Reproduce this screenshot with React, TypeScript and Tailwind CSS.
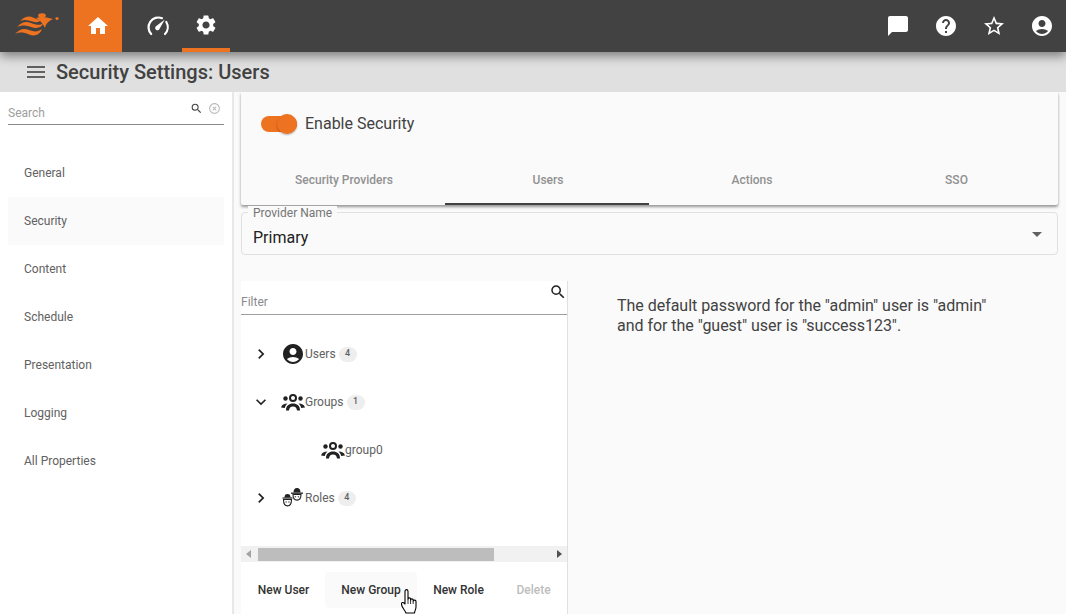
import React from "react";
import {
    MdAccountCircle,
    MdArrowDropDown,
    MdChatBubble,
    MdChevronRight,
    MdExpandMore,
    MdHelp,
    MdHighlightOff,
    MdHome,
    MdMenu,
    MdSearch,
    MdSettings,
    MdStarBorder,
} from "react-icons/md";

const navItems = ["General", "Security", "Content", "Schedule", "Presentation", "Logging", "All Properties"];
const tabs = ["Security Providers", "Users", "Actions", "SSO"];

function Logo() {
    return (
        <svg width="44" height="23" viewBox="0 0 44 23" fill="#ee7320">
            <path d="M5 8C10 3.500 14 2.500 18 4.500s6 2.500 8 1.500c-.5 3-4 4-8.500 2.500S10 6 5 8z" />
            <path d="M2 14C7 8.500 11 8 16 10s9 2.500 12 .5c-1 4-6 5.500-12 3.500S7 12 2 14z" />
            <path d="M0 21c5-5.500 9-6 14-4s9 2 13-1c-2 5.500-7 8-13 5.500S5 19 0 21z" />
            <path d="M21 5c5-2 10-1 17 1-4 2-7 4-8 9-2-4-5-8-9-10z" />
            <ellipse cx="27" cy="2.600" rx="3.800" ry="2.400" />
            <circle cx="42" cy="5.500" r="1.600" />
        </svg>
    );
}

function SpeedIcon() {
    return (
        <svg width="24" height="24" viewBox="0 0 24 24" fill="none" stroke="#fff" strokeWidth="2.200" strokeLinecap="round">
            <path d="M5.200 20A9.800 9.800 0 0 1 16 4.200" />
            <path d="M20.300 8A9.800 9.800 0 0 1 19 20" />
            <path d="M18.800 5.500l-5.200 9.300a2.300 2.300 0 1 1-3.300-2.800z" fill="#fff" stroke="none" />
        </svg>
    );
}

function GroupsIcon() {
    return (
        <svg width="24" height="18" viewBox="0 0 24 18" fill="#212121">
            <circle cx="12" cy="5" r="3" fill="none" stroke="#212121" strokeWidth="2" />
            <circle cx="4.500" cy="5.500" r="2.200" />
            <circle cx="19.500" cy="5.500" r="2.200" />
            <path d="M5 17.500c0-5 3-7 7-7s7 2 7 7h-3c-.3-2.800-1.500-4-4-4s-3.700 1.200-4 4z" />
            <path d="M0 14.500c1-3 3-4 6.500-4-1.500 1.500-2.300 2.500-2.700 4.500z" />
            <path d="M24 14.500c-1-3-3-4-6.500-4 1.500 1.500 2.300 2.500 2.700 4.500z" />
        </svg>
    );
}

function RolesIcon() {
    return (
        <svg width="22" height="20" viewBox="0 0 22 20" fill="none" stroke="#212121">
            <path d="M2.500 9.500c0-2.500 1-3.500 3-3.500s3 1 3 3.500z" fill="#212121" stroke="none" />
            <path d="M.500 10h10" strokeWidth="1.200" />
            <path d="M1.500 11.500c0 8.500 8 8.500 8 0z" strokeWidth="1.100" />
            <path d="M3.500 14h1.300M6.300 14h1.300" strokeWidth="1" />
            <path d="M11.500 4.500c0-3 1.200-4.500 3.500-4.500s3.500 1.500 3.500 4.500z" fill="#212121" stroke="none" />
            <path d="M9 5.200h12" strokeWidth="1.300" />
            <path d="M11 6.500c0 7.500 8 7.500 8 0z" strokeWidth="1.100" />
            <path d="M12.800 8.800h1.300M15.800 8.800h1.300" strokeWidth="1" />
        </svg>
    );
}

function HandCursor() {
    return (
        <svg width="17" height="25" viewBox="0 0 17 25" className="absolute left-[401px] top-[589px]">
            <path
                d="M4 2.500c0-2.500 3-2.500 3 0v7.500c0-1.500 2.600-1.500 2.600 0v1c0-1.500 2.600-1.500 2.600 0v1c0-1.300 2.800-1.300 2.800 .5v5.500c0 2.500-1.500 4-1.500 6H5c-1-3-4.500-5.500-4.500-9 0-1.500 1.500-2 2.500-1l1 1z"
                fill="#fff"
                stroke="#000"
                strokeWidth="1.100"
                strokeLinejoin="round"
            />
            <path d="M7 10v5M9.600 11v4M12.200 12v3" stroke="#000" strokeWidth=".8" />
        </svg>
    );
}

function TreeRow({
    expanded,
    icon,
    label,
    count,
}: {
    expanded?: boolean;
    icon: React.ReactNode;
    label: string;
    count: string;
}) {
    return (
        <div className="flex h-12 items-center pl-[10px]">
            <span className="flex w-[30px] justify-start text-[20px] text-[#212121]">
                {expanded ? <MdExpandMore /> : <MdChevronRight />}
            </span>
            <span className="flex w-[24px] justify-center">{icon}</span>
            <span className="text-[12px] text-[#616161]">{label}</span>
            <span className="ml-[3px] flex h-[15px] min-w-[18px] items-center justify-center rounded-full bg-[#eeeeee] px-[5px] text-[9px] font-medium text-[#616161]">
                {count}
            </span>
        </div>
    );
}

export default function App() {
    return (
        <div className="relative flex h-[614px] w-[1066px] flex-col overflow-hidden bg-[#fafafa] font-['Roboto',sans-serif]">
            {/* top bar */}
            <header className="z-20 flex h-[52px] shrink-0 items-stretch bg-[#424242] shadow-[0_4px_10px_rgba(0,0,0,0.45)]">
                <div className="flex w-[74px] items-center pb-[3px] pl-[15px]">
                    <Logo />
                </div>
                <div className="flex w-[48px] items-center justify-center bg-[#ee7320] text-[24px] text-white">
                    <MdHome />
                </div>
                <div className="ml-[12px] flex w-[48px] items-center justify-center">
                    <SpeedIcon />
                </div>
                <div className="flex w-[48px] items-center justify-center border-b-[4px] border-[#ee7320] pt-[1px] text-[24px] text-white">
                    <MdSettings />
                </div>
                <div className="ml-auto flex items-center gap-[24px] pr-[12px] text-[24px] text-white">
                    <MdChatBubble />
                    <MdHelp />
                    <MdStarBorder />
                    <MdAccountCircle />
                </div>
            </header>

            {/* page title */}
            <div className="z-10 flex h-[40px] shrink-0 items-center bg-[#e0e0e0] pl-[24px]">
                <MdMenu className="text-[24px] text-[#616161]" />
                <h1 className="ml-[8px] text-[20px] font-medium text-[#424242]">Security Settings: Users</h1>
            </div>

            <div className="flex min-h-0 flex-1">
                {/* sidebar */}
                <aside className="w-[234px] shrink-0 border-r-2 border-[#e8e8e8] bg-white px-[8px]">
                    <div className="flex h-[33px] items-end border-b border-[#8a8a8a] pb-[2px]">
                        <span className="text-[12px] text-[#9e9e9e]">Search</span>
                        <span className="ml-auto flex items-center gap-[5px] self-center pr-[3px] pt-[3px]">
                            <MdSearch className="text-[13px] text-[#424242]" />
                            <MdHighlightOff className="text-[13px] text-[#bdbdbd]" />
                        </span>
                    </div>
                    <nav className="mt-[24px]">
                        {navItems.map((item) => (
                            <div
                                key={item}
                                className={`flex h-12 items-center pl-[16px] text-[12px] text-[#616161] ${
                                    item === "Security" ? "bg-[#fafafa]" : ""
                                }`}
                            >
                                {item}
                            </div>
                        ))}
                    </nav>
                </aside>

                {/* main */}
                <main className="min-w-0 flex-1 pl-[7px] pr-[8px]">
                    <section className="h-[113px] rounded-b-[2px] bg-[#fafafa] shadow-[0_2px_3px_rgba(0,0,0,0.4)]">
                        <div className="flex h-[64px] items-center pl-[20px]">
                            <div className="relative h-[16px] w-[36px] rounded-full bg-[#ee7320]">
                                <div className="absolute -top-[2px] right-0 h-[20px] w-[20px] rounded-full bg-[#ee7320] shadow-[0_1px_2px_rgba(0,0,0,0.3)]" />
                            </div>
                            <span className="ml-[8px] text-[16px] text-[#424242]">Enable Security</span>
                        </div>
                        <div className="grid h-[49px] grid-cols-[204px_204px_204px_1fr]">
                            {tabs.map((tab) => (
                                <div
                                    key={tab}
                                    className={`flex items-center justify-center border-b-2 pl-[2px] pt-[1px] text-[12px] font-medium text-[#919191] ${
                                        tab === "Users" ? "border-[#424242]" : "border-transparent"
                                    }`}
                                >
                                    {tab}
                                </div>
                            ))}
                        </div>
                    </section>

                    {/* provider select */}
                    <div className="relative mt-[7px] flex h-[43px] items-center rounded-[4px] border border-[#e0e0e0] pl-[11px] pr-[8px]">
                        <span className="absolute -top-[7px] left-[6px] bg-[#fafafa] px-[5px] text-[12px] leading-[14px] text-[#757575]">
                            Provider Name
                        </span>
                        <span className="pt-[9px] text-[16px] text-[#212121]">Primary</span>
                        <MdArrowDropDown className="ml-auto text-[24px] text-[#616161]" />
                    </div>

                    <div className="mt-[26px] flex h-[333px]">
                        {/* tree panel */}
                        <div className="flex w-[327px] shrink-0 flex-col border-r border-[#e0e0e0] bg-white">
                            <div className="flex h-[34px] items-end justify-between border-b border-[#9e9e9e] pb-[3px]">
                                <span className="text-[12px] text-[#8a8a8a]">Filter</span>
                                <MdSearch className="mb-[10px] text-[18px] text-[#212121]" />
                            </div>
                            <div className="h-[231px] pt-[15px]">
                                <TreeRow
                                    icon={<MdAccountCircle className="text-[24px] text-[#212121]" />}
                                    label="Users"
                                    count="4"
                                />
                                <TreeRow expanded icon={<GroupsIcon />} label="Groups" count="1" />
                                <div className="flex h-12 items-center pl-[80px]">
                                    <GroupsIcon />
                                    <span className="text-[12px] text-[#616161]">group0</span>
                                </div>
                                <TreeRow icon={<RolesIcon />} label="Roles" count="4" />
                            </div>
                            {/* horizontal scrollbar */}
                            <div className="flex h-[16px] items-center bg-[#f1f1f1]">
                                <span className="ml-[5px] h-0 w-0 border-y-[4px] border-r-[5px] border-y-transparent border-r-[#a3a3a3]" />
                                <div className="ml-[7px] h-[13px] w-[236px] bg-[#bdbdbd]" />
                                <span className="ml-auto mr-[5px] h-0 w-0 border-y-[4px] border-l-[5px] border-y-transparent border-l-[#505050]" />
                            </div>
                            <div className="flex items-center pl-[1px] pt-[10px] text-[12px] font-medium">
                                <span className="flex h-[36px] w-[83px] items-center justify-center text-[#333333]">New User</span>
                                <span className="flex h-[36px] w-[92px] items-center justify-center rounded-[4px] bg-[#fafafa] text-[#333333]">
                                    New Group
                                </span>
                                <span className="flex h-[36px] w-[83px] items-center justify-center text-[#333333]">New Role</span>
                                <span className="flex h-[36px] w-[67px] items-center justify-center text-[#bdbdbd]">Delete</span>
                            </div>
                        </div>

                        <p className="ml-[49px] w-[400px] pt-[15px] text-[16px] leading-[20px] tracking-[-0.03px] text-[#424242]">
                            The default password for the "admin" user is "admin"
                            <br />
                            and for the "guest" user is "success123".
                        </p>
                    </div>
                </main>
            </div>
            <HandCursor />
        </div>
    );
}
